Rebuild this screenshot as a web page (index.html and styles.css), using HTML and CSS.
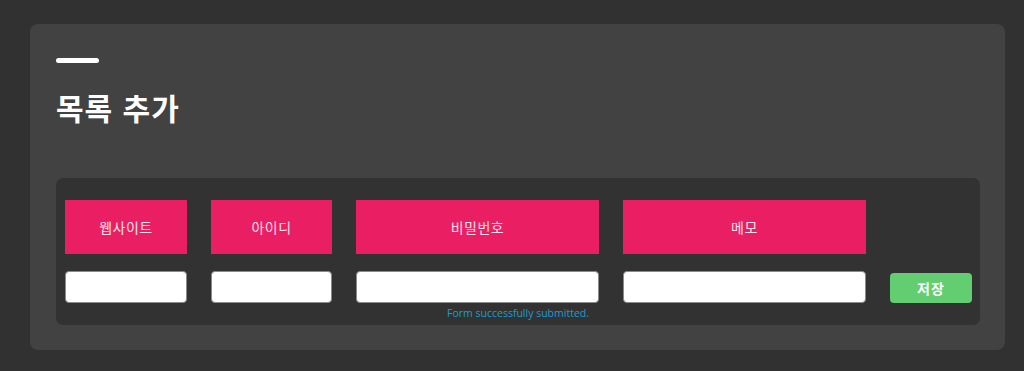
FILE: index.html
```html
<!doctype html>
<html lang="ko">

<head>
  <meta charset="UTF-8" />
  <meta name="viewport" content="width=device-width, initial-scale=1.0">
  <title>목록 추가</title>
  <link rel="stylesheet" href="styles.css">
</head>

<body>
  <div class="card">
    <div class="accent"></div>
    <h1>목록 추가</h1>

    <form class="add-form" onsubmit="return false;">
      <div class="form-grid">
        <div class="label">웹사이트</div>
        <div class="label">아이디</div>
        <div class="label">비밀번호</div>
        <div class="label">메모</div>
        <div></div>

        <input type="text" class="field">
        <input type="text" class="field">
        <input type="password" class="field">
        <input type="text" class="field">
        <button type="submit" class="save-btn">저장</button>
      </div>
      <p class="status">Form successfully submitted.</p>
    </form>
  </div>
</body>

</html>
```

FILE: styles.css
```css
body {
  margin: 0;
  padding: 24px 19px 21px 30px;
  background-color: #313131;
  font-family: "Noto Sans CJK KR", "Noto Sans", sans-serif;
}

.card {
  background-color: #424242;
  border-radius: 8px;
  padding: 34px 25px 25px 26px;
}

.accent {
  width: 43px;
  height: 5px;
  border-radius: 3px;
  background-color: #ffffff;
}

h1 {
  margin: 24px 0 0 0;
  color: #ffffff;
  font-size: 30px;
  font-weight: bold;
  letter-spacing: 1px;
  line-height: 40px;
  height: 91px;
}

.add-form {
  background-color: #323232;
  border-radius: 7px;
  padding: 22px 9px 0 9px;
  height: 147px;
  box-sizing: border-box;
}

.form-grid {
  display: grid;
  grid-template-columns: 122px 121px 243px 243px 82px;
  grid-template-rows: 54px 32px;
  column-gap: 24px;
  row-gap: 17px;
  align-items: center;
}

.label {
  height: 54px;
  background-color: #e91e63;
  color: #fbe3ec;
  font-size: 14px;
  letter-spacing: 0.5px;
  display: flex;
  align-items: center;
  justify-content: center;
}

.field {
  height: 32px;
  box-sizing: border-box;
  margin: 0;
  background-color: #ffffff;
  border: 1px solid #8a8a8a;
  border-radius: 4px;
}

.save-btn {
  height: 30px;
  margin-top: 2px;
  border: none;
  border-radius: 4px;
  background-color: #62ce71;
  color: #ffffff;
  font-family: "Noto Sans CJK KR", sans-serif;
  font-size: 14px;
  font-weight: bold;
  letter-spacing: 1px;
  cursor: pointer;
}

.status {
  margin: 3px 0 0 0;
  text-align: center;
  color: #1c9ccf;
  font-family: "Open Sans", sans-serif;
  font-size: 10.5px;
  line-height: 14px;
}
```
